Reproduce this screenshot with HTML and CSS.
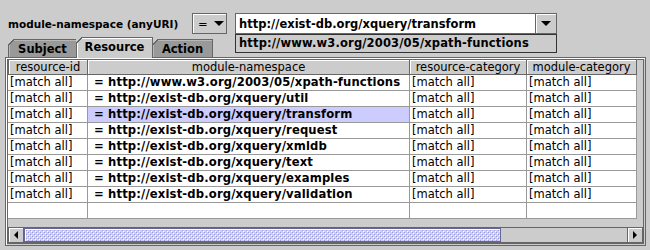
FILE: index.html
```html
<!DOCTYPE html>
<html lang="en">
<head>
  <meta charset="UTF-8" />
  <title>Policy editor - Resource</title>
  <link rel="stylesheet" href="styles.css">
</head>
<body>

  <div class="toolbar">
    <span class="field-label">module-namespace (anyURI)</span>
    <div class="combo combo-op">
      <span class="combo-value">=</span>
      <span class="arrow-down"></span>
    </div>
    <div class="combo combo-uri">
      <span class="combo-text">http://exist-db.org/xquery/transform</span>
      <span class="combo-btn"><span class="arrow-down"></span></span>
      <div class="popup">http://www.w3.org/2003/05/xpath-functions</div>
    </div>
  </div>

  <div class="tabpane">
    <div class="tabs">
      <div class="tab tab-subject">Subject</div>
      <div class="tab tab-resource selected">Resource</div>
      <div class="tab tab-action">Action</div>
    </div>
    <div class="tab-content">
      <div class="scroll-pane">
        <table class="grid">
          <colgroup>
            <col class="c-id">
            <col class="c-ns">
            <col class="c-rcat">
            <col class="c-mcat">
          </colgroup>
          <thead>
            <tr>
              <th>resource-id</th>
              <th>module-namespace</th>
              <th>resource-category</th>
              <th>module-category</th>
            </tr>
          </thead>
          <tbody>
            <tr><td>[match all]</td><td class="uri">= http://www.w3.org/2003/05/xpath-functions</td><td>[match all]</td><td>[match all]</td></tr>
            <tr><td>[match all]</td><td class="uri">= http://exist-db.org/xquery/util</td><td>[match all]</td><td>[match all]</td></tr>
            <tr><td>[match all]</td><td class="uri sel">= http://exist-db.org/xquery/transform</td><td>[match all]</td><td>[match all]</td></tr>
            <tr><td>[match all]</td><td class="uri">= http://exist-db.org/xquery/request</td><td>[match all]</td><td>[match all]</td></tr>
            <tr><td>[match all]</td><td class="uri">= http://exist-db.org/xquery/xmldb</td><td>[match all]</td><td>[match all]</td></tr>
            <tr><td>[match all]</td><td class="uri">= http://exist-db.org/xquery/text</td><td>[match all]</td><td>[match all]</td></tr>
            <tr><td>[match all]</td><td class="uri">= http://exist-db.org/xquery/examples</td><td>[match all]</td><td>[match all]</td></tr>
            <tr><td>[match all]</td><td class="uri">= http://exist-db.org/xquery/validation</td><td>[match all]</td><td>[match all]</td></tr>
            <tr><td></td><td></td><td></td><td></td></tr>
          </tbody>
        </table>
        <div class="viewport-fill"></div>
        <div class="hscroll">
          <div class="sb-btn"><span class="arrow-left"></span></div>
          <div class="sb-track">
            <div class="sb-thumb">
              <svg width="100%" height="100%">
                <defs>
                  <pattern id="bumps" width="4" height="4" patternUnits="userSpaceOnUse">
                    <rect x="0" y="0" width="1" height="1" fill="#ffffff"/>
                    <rect x="2" y="2" width="1" height="1" fill="#ffffff"/>
                    <rect x="1" y="1" width="1" height="1" fill="#9999cc"/>
                    <rect x="3" y="3" width="1" height="1" fill="#9999cc"/>
                  </pattern>
                </defs>
                <rect width="100%" height="100%" fill="url(#bumps)"/>
              </svg>
            </div>
          </div>
          <div class="sb-btn"><span class="arrow-right"></span></div>
        </div>
      </div>
    </div>
  </div>

</body>
</html>
```

FILE: styles.css
```css
body {
  margin: 0;
  width: 650px;
  height: 250px;
  overflow: hidden;
  background: #cccccc;
  font-family: "DejaVu Sans", sans-serif;
  font-size: 11.5px;
  color: #000000;
}

/* top row: label + operator + value */
.toolbar {
  display: flex;
  align-items: center;
  height: 21px;
  margin-top: 13px;
  padding-left: 8px;
}

.field-label {
  width: 184px;
  font-weight: bold;
  font-size: 10.5px;
}

.combo {
  height: 21px;
  box-sizing: border-box;
  border: 1px solid #666666;
  display: flex;
  align-items: center;
}

.combo-op {
  width: 35px;
  margin-right: 8px;
  padding-left: 5px;
  gap: 6px;
  background: #cccccc;
  box-shadow: inset 1px 1px #ffffff;
}

.combo-uri {
  position: relative;
  width: 322px;
  background: #ffffff;
}

.combo-text {
  flex: 1;
  padding-left: 3px;
  font-weight: bold;
}

.combo-btn {
  width: 21px;
  height: 100%;
  box-sizing: border-box;
  border-left: 1px solid #666666;
  background: #cccccc;
  box-shadow: inset 1px 1px #ffffff;
  display: flex;
  align-items: center;
  justify-content: center;
}

.arrow-down {
  width: 0;
  height: 0;
  border-top: 5px solid #000000;
  border-left: 5px solid transparent;
  border-right: 5px solid transparent;
}

.popup {
  position: absolute;
  left: -1px;
  top: 20px;
  width: 322px;
  height: 19px;
  box-sizing: border-box;
  padding-left: 3px;
  border: 1px solid #333333;
  background: #cccccc;
  font-weight: bold;
  letter-spacing: 0.15px;
  line-height: 17px;
  z-index: 5;
}

/* tabs */
.tabpane {
  margin: 3px 0 0 5px;
  width: 641px;
}

.tabs {
  display: flex;
  align-items: flex-end;
  height: 20px;
  padding-left: 3px;
}

.tab {
  position: relative;
  height: 18px;
  box-sizing: border-box;
  border: 1px solid #666666;
  border-bottom: none;
  background: #999999;
  box-shadow: inset 1px 1px #b8b8b8;
  font-weight: bold;
  text-align: center;
  line-height: 18px;
}

.tab::before {
  content: "";
  position: absolute;
  top: -1px;
  left: -1px;
  width: 7px;
  height: 7px;
  background: linear-gradient(135deg, #cccccc 0 4.2px, #666666 4.2px 5.4px, transparent 5.4px);
}

.tab + .tab {
  margin-left: -1px;
}

.tab-subject { width: 69px; }
.tab-resource { width: 77px; }
.tab-action { width: 61px; }

.tab.selected {
  height: 21px;
  margin-bottom: -1px;
  background: #cccccc;
  box-shadow: inset 1px 1px #ffffff;
  line-height: 19px;
  z-index: 1;
}

.tab-content {
  height: 189px;
  box-sizing: border-box;
  padding: 1px;
  border: 1px solid #666666;
  box-shadow: inset 1px 1px #ffffff;
}

.scroll-pane {
  height: 185px;
  box-sizing: border-box;
  border: 1px solid #666666;
  background: #cccccc;
  display: flex;
  flex-direction: column;
  overflow: hidden;
}

/* table */
.grid {
  width: 629px;
  table-layout: fixed;
  border-collapse: separate;
  border-spacing: 0;
  background: #ffffff;
}

.c-id { width: 80px; }
.c-ns { width: 322px; }
.c-rcat { width: 117px; }
.c-mcat { width: 110px; }

.grid th {
  height: 14px;
  padding: 0;
  border-right: 1px solid #666666;
  border-bottom: 1px solid #666666;
  border-left: 1px solid #666666;
  box-shadow: inset 1px 1px #ffffff;
  background: #cccccc;
  font-weight: normal;
  line-height: 14px;
  text-align: center;
  white-space: nowrap;
  overflow: hidden;
}

.grid th + th {
  border-left: none;
}

.grid td {
  height: 15px;
  padding: 0 0 0 2px;
  border-right: 1px solid #999999;
  border-bottom: 1px solid #999999;
  line-height: 15px;
  white-space: nowrap;
  overflow: hidden;
}

.grid td.uri {
  padding-left: 6px;
  font-weight: bold;
  font-size: 11.6px;
  letter-spacing: 0.15px;
}

.grid td.sel {
  background: #ccccff;
}

.viewport-fill {
  flex: 1;
}

/* horizontal scrollbar */
.hscroll {
  display: flex;
  height: 16px;
}

.sb-btn {
  width: 16px;
  box-sizing: border-box;
  border: 1px solid #666666;
  background: #cccccc;
  box-shadow: inset 1px 1px #ffffff;
  display: flex;
  align-items: center;
  justify-content: center;
}

.arrow-left {
  border-right: 4px solid #000000;
  border-top: 4px solid transparent;
  border-bottom: 4px solid transparent;
}

.arrow-right {
  border-left: 4px solid #000000;
  border-top: 4px solid transparent;
  border-bottom: 4px solid transparent;
}

.sb-track {
  flex: 1;
  display: flex;
  box-sizing: border-box;
  border-top: 1px solid #666666;
  border-bottom: 1px solid #666666;
  background: #cccccc;
}

.sb-thumb {
  width: 477px;
  box-sizing: border-box;
  border: 1px solid #666699;
  background: #ccccff;
  box-shadow: inset 1px 1px #ffffff;
}

.sb-thumb svg {
  display: block;
}
```
